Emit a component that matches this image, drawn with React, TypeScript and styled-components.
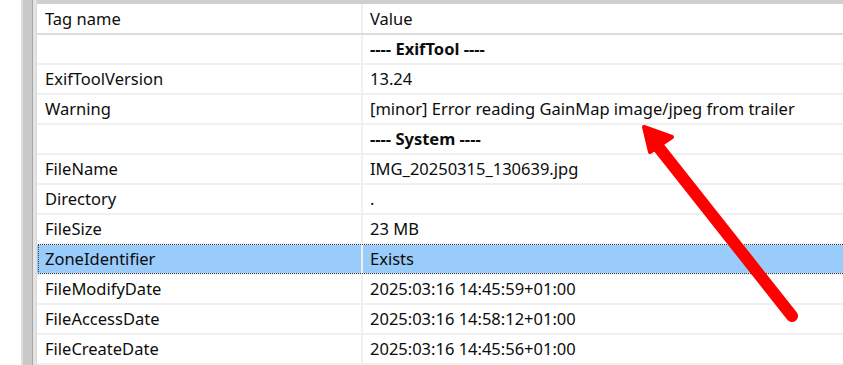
import React from "react";
import styled, { createGlobalStyle } from "styled-components";

const Global = createGlobalStyle`
  html, body { margin: 0; padding: 0; background: #ffffff; overflow: hidden; }
  #root { width: 843px; height: 365px; }
`;

const Window = styled.div`
  position: relative;
  display: flex;
  width: 843px;
  height: 365px;
  overflow: hidden;
  font-family: "Noto Sans", "Open Sans", sans-serif;
  font-size: 16.5px;
  color: #0d0d0d;
`;

const SidePane = styled.div`
  width: 21px;
  flex: none;
  background: #ffffff;
`;

const Splitter = styled.div`
  width: 16px;
  flex: none;
  background: linear-gradient(
    to right,
    #dedede 0px,
    #dedede 2px,
    #c9c9c9 2px,
    #c9c9c9 11px,
    #a6a6a6 11px,
    #a6a6a6 12px,
    #e4e4e4 12px,
    #e4e4e4 15px,
    #d9d9d9 15px,
    #d9d9d9 16px
  );
`;

const ListPanel = styled.div`
  flex: 1;
  display: flex;
  flex-direction: column;
  min-width: 0;
`;

const TopStrip = styled.div`
  height: 4px;
  flex: none;
  background: #cfcfcf;
`;

const Row = styled.div<{ $header?: boolean; $selected?: boolean }>`
  position: relative;
  display: grid;
  grid-template-columns: 326px 1fr;
  height: ${(p) => (p.$header ? "29px" : "28px")};
  flex: none;
  background: ${(p) => (p.$selected ? "#99cbfb" : "#ffffff")};
  border-bottom: 2px solid ${(p) => (p.$header ? "#dcdcdc" : "#f0f0f0")};
  ${(p) =>
    p.$selected
      ? `&::after {
          content: "";
          position: absolute;
          left: 1px; right: 0; top: -1px; bottom: -1px;
          border: 1px dotted #3a3a3a;
          border-right: 0;
          pointer-events: none;
        }`
      : ""}
`;

const TagCell = styled.div`
  display: flex;
  align-items: center;
  padding-left: 8px;
  padding-bottom: 1px;
  border-right: 2px solid #f0f0f0;
  white-space: nowrap;
  overflow: hidden;
`;

const ValueCell = styled.div<{ $section?: boolean }>`
  display: flex;
  align-items: center;
  padding-left: 7px;
  padding-bottom: 1px;
  white-space: nowrap;
  font-weight: ${(p) => (p.$section ? 700 : 400)};
`;

const ArrowLayer = styled.svg`
  position: absolute;
  left: 0;
  top: 0;
  width: 843px;
  height: 365px;
  pointer-events: none;
`;

type Entry = { tag?: string; value: string; section?: boolean; selected?: boolean };

const entries: Entry[] = [
  { value: "---- ExifTool ----", section: true },
  { tag: "ExifToolVersion", value: "13.24" },
  { tag: "Warning", value: "[minor] Error reading GainMap image/jpeg from trailer" },
  { value: "---- System ----", section: true },
  { tag: "FileName", value: "IMG_20250315_130639.jpg" },
  { tag: "Directory", value: "." },
  { tag: "FileSize", value: "23 MB" },
  { tag: "ZoneIdentifier", value: "Exists", selected: true },
  { tag: "FileModifyDate", value: "2025:03:16 14:45:59+01:00" },
  { tag: "FileAccessDate", value: "2025:03:16 14:58:12+01:00" },
  { tag: "FileCreateDate", value: "2025:03:16 14:45:56+01:00" },
];

export default function App() {
  return (
    <>
      <Global />
      <Window>
        <SidePane />
        <Splitter />
        <ListPanel>
          <TopStrip />
          <Row $header>
            <TagCell>Tag name</TagCell>
            <ValueCell>Value</ValueCell>
          </Row>
          {entries.map((e, i) => (
            <Row key={i} $selected={e.selected}>
              <TagCell>{e.tag ?? ""}</TagCell>
              <ValueCell $section={e.section}>{e.value}</ValueCell>
            </Row>
          ))}
        </ListPanel>
        <ArrowLayer viewBox="0 0 843 365">
          <line
            x1="656"
            y1="144"
            x2="792"
            y2="316"
            stroke="#ff0000"
            strokeWidth="12"
            strokeLinecap="round"
          />
          <polygon
            points="644,127 672,137 650,152"
            fill="#ff0000"
            stroke="#ff0000"
            strokeWidth="4"
            strokeLinejoin="round"
          />
        </ArrowLayer>
      </Window>
    </>
  );
}
